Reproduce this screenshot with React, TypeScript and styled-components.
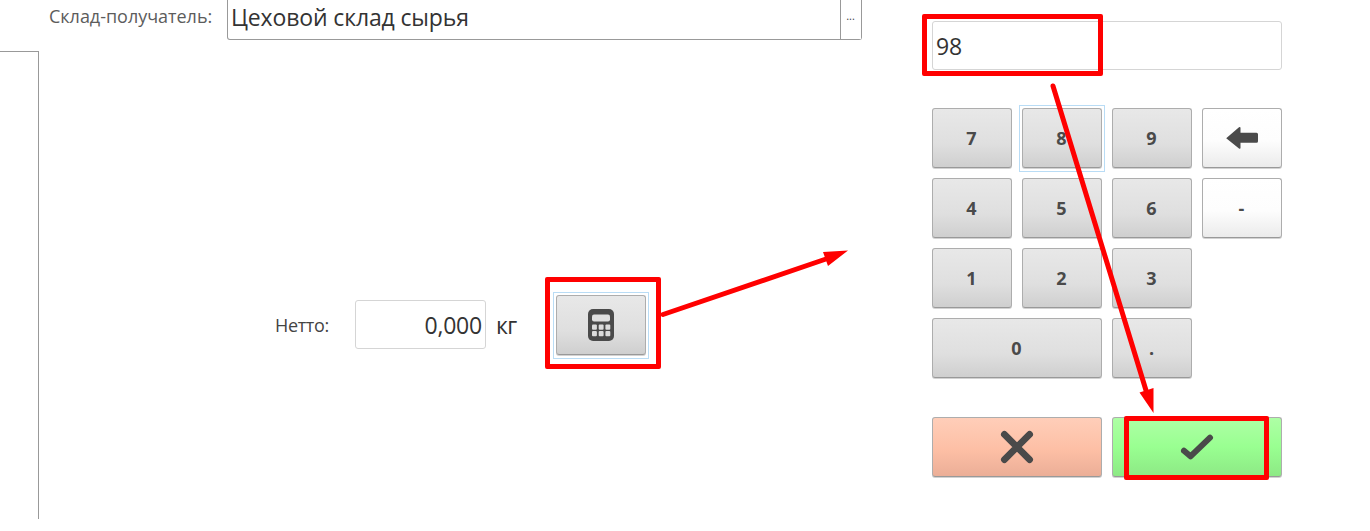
import React from "react";
import styled, { createGlobalStyle } from "styled-components";

const GlobalStyle = createGlobalStyle`
  *, *::before, *::after { box-sizing: border-box; }
  body { margin: 0; background: #fff; }
  button { font: inherit; margin: 0; }
`;

const Page = styled.main`
  position: relative;
  display: flex;
  gap: 70px;
  width: 1370px;
  height: 531px;
  overflow: hidden;
  background: #fff;
  color: #333;
  font-family: "Open Sans", "Noto Sans", sans-serif;
`;

const FormSide = styled.section`
  display: flex;
  flex-direction: column;
  gap: 11px;
  width: 862px;
  height: 519px;
`;

const FieldRow = styled.div`
  display: flex;
  height: 40px;
  padding-left: 49px;
`;

const FieldLabel = styled.label`
  width: 178px;
  padding-top: 3px;
  font-size: 18px;
  line-height: 26px;
  letter-spacing: -0.02px;
  color: #5c5c5c;
  white-space: nowrap;
`;

const SelectField = styled.div`
  display: flex;
  flex: 1;
  border: 1px solid #999;
  border-top: 0;
  border-radius: 0 0 3px 3px;
`;

const SelectValue = styled.span`
  flex: 1;
  padding: 1px 0 0 3px;
  font-size: 23px;
  line-height: 32px;
  letter-spacing: -0.14px;
  white-space: nowrap;
`;

const MoreButton = styled.button`
  width: 21px;
  padding: 0 1px 8px 0;
  border: 0;
  border-left: 1px solid #999;
  background: #fff;
  color: #444;
  font-size: 11px;
  line-height: 31px;
`;

const FormBody = styled.div`
  display: flex;
  flex: 1;
`;

const ListPanel = styled.div`
  width: 39px;
  border: 1px solid #999;
  border-width: 1px 1px 0 0;
`;

const WeightRow = styled.div`
  display: flex;
  align-items: flex-start;
  padding: 244px 0 0 236px;
`;

const WeightLabel = styled.label`
  width: 80px;
  padding-top: 17px;
  font-size: 18px;
  line-height: 26px;
  letter-spacing: -0.35px;
  color: #444;
`;

const ValueBox = styled.div<{ $width: number; $right?: boolean; $top?: number }>`
  width: ${(p) => p.$width}px;
  height: 49px;
  margin-top: ${(p) => p.$top ?? 0}px;
  padding: 0 3px;
  border: 1px solid #d5d5d5;
  border-radius: 3px;
  font-size: 23px;
  line-height: 48px;
  letter-spacing: -0.2px;
  text-align: ${(p) => (p.$right ? "right" : "left")};
`;

const Unit = styled.span`
  width: 70px;
  padding: 14px 0 0 10px;
  font-size: 23px;
  line-height: 32px;
  letter-spacing: -0.6px;
`;

type Tone = "grey" | "white" | "red" | "green";

const fills: Record<Tone, string> = {
  grey: "linear-gradient(#e8e8e8, #dfdfdf 60%, #cfcfcf)",
  white: "linear-gradient(#fff, #fdfdfd 55%, #ebebeb)",
  red: "linear-gradient(#ffceb9, #fdbfa5 55%, #ebae97)",
  green: "linear-gradient(#aeffa5, #99ff91 50%, #8de985)",
};

const Key = styled.button<{ $tone?: Tone; $span?: number; $focused?: boolean; $width?: number }>`
  position: relative;
  display: flex;
  align-items: center;
  justify-content: center;
  grid-column: span ${(p) => p.$span ?? 1};
  width: ${(p) => (p.$width ? `${p.$width}px` : "auto")};
  height: 60px;
  padding: 0 1px 0 0;
  border: 1px solid #adadad;
  border-bottom-color: #999;
  border-radius: 3px;
  box-shadow: 0 1px 0 #d2d2d2;
  background: ${(p) => fills[p.$tone ?? "grey"]};
  color: #4a4a4a;
  font-size: 18px;
  font-weight: 700;
  line-height: 26px;

  &::after {
    content: "";
    display: ${(p) => (p.$focused ? "block" : "none")};
    position: absolute;
    inset: -4px -4px -5px;
    border: 1px solid #b9dcf5;
  }
`;

const KeypadSide = styled.section`
  width: 350px;
  padding-top: 21px;
`;

const KeyGrid = styled.div`
  display: grid;
  grid-template-columns: repeat(4, 80px);
  gap: 10px;
  margin-top: 38px;
`;

const ActionRow = styled.div`
  display: grid;
  grid-template-columns: 170px 170px;
  gap: 10px;
  margin-top: 39px;
`;

const GridGap = styled.span``;

const Highlight = styled.div<{ $x: number; $y: number; $w: number; $h: number }>`
  position: absolute;
  left: ${(p) => p.$x}px;
  top: ${(p) => p.$y}px;
  width: ${(p) => p.$w}px;
  height: ${(p) => p.$h}px;
  border: 5px solid #f00;
  border-radius: 2px;
  pointer-events: none;
`;

const Arrows = styled.svg`
  position: absolute;
  inset: 0;
  pointer-events: none;
`;

const Icon = styled.svg`
  display: block;
  flex: none;
  position: relative;
  left: 0.5px;
`;

const CalculatorIcon = () => (
  <Icon width="26" height="32" viewBox="0 0 26 32">
    <rect width="26" height="32" rx="5" fill="#4a4a4a" />
    <rect x="4" y="5.5" width="18" height="7" rx="2" fill="#e0e0e0" />
    {[15.5, 22].map((y) =>
      [4, 10.7, 17.4].map((x) => (
        <rect key={`${x}-${y}`} x={x} y={y} width="4.9" height="5.2" rx="1" fill="#dcdcdc" />
      )),
    )}
  </Icon>
);

const BackIcon = () => (
  <Icon width="32" height="24" viewBox="0 0 32 24">
    <path d="M0.200 12.300 13 1.300q1.500-.8 1.500.8V6.800H30.500q1.500 0 1.500 1.500v7q0 1.500-1.500 1.500H14.500v5q0 1.600-1.500.8Z" fill="#4a4a4a" />
  </Icon>
);

const CrossIcon = () => (
  <Icon width="34" height="34" viewBox="0 0 34 34">
    <path d="M4.400 4.400 29.600 29.600M29.600 4.400 4.400 29.600" stroke="#4a4a4a" strokeWidth="6.800" strokeLinecap="round" />
  </Icon>
);

const CheckIcon = () => (
  <Icon width="34" height="28" viewBox="0 0 34 28">
    <path d="M4 17.800 10.500 23.300 30 4.700" fill="none" stroke="#4a4a4a" strokeWidth="6" strokeLinecap="round" strokeLinejoin="round" />
  </Icon>
);

export default function App() {
  return (
    <>
      <GlobalStyle />
      <Page>
        <FormSide>
          <FieldRow>
            <FieldLabel>Склад-получатель:</FieldLabel>
            <SelectField>
              <SelectValue>Цеховой склад сырья</SelectValue>
              <MoreButton>...</MoreButton>
            </SelectField>
          </FieldRow>
          <FormBody>
            <ListPanel />
            <WeightRow>
              <WeightLabel>Нетто:</WeightLabel>
              <ValueBox $width={131} $right $top={5}>0,000</ValueBox>
              <Unit>кг</Unit>
              <Key $width={90} $focused aria-label="Калькулятор">
                <CalculatorIcon />
              </Key>
            </WeightRow>
          </FormBody>
        </FormSide>
        <KeypadSide>
          <ValueBox $width={350}>98</ValueBox>
          <KeyGrid>
            <Key>7</Key>
            <Key $focused>8</Key>
            <Key>9</Key>
            <Key $tone="white"><BackIcon /></Key>
            <Key>4</Key>
            <Key>5</Key>
            <Key>6</Key>
            <Key $tone="white">-</Key>
            <Key>1</Key>
            <Key>2</Key>
            <Key>3</Key>
            <GridGap />
            <Key $span={2}>0</Key>
            <Key>.</Key>
          </KeyGrid>
          <ActionRow>
            <Key $tone="red"><CrossIcon /></Key>
            <Key $tone="green"><CheckIcon /></Key>
          </ActionRow>
        </KeypadSide>
        <Highlight $x={922} $y={14} $w={181} $h={62} />
        <Highlight $x={545} $y={277} $w={116} $h={92} />
        <Highlight $x={1124} $y={416} $w={145} $h={64} />
        <Arrows width="1370" height="531" viewBox="0 0 1370 531">
          <g fill="#f00" stroke="#f00">
            <path d="M663 314.500 826 259M1053 86 1146.500 392" strokeWidth="5" strokeLinecap="round" />
            <path d="M848 250.500 823 252 828 266ZM1153.500 413 1139.500 392.500 1153.500 388Z" stroke="none" />
          </g>
        </Arrows>
      </Page>
    </>
  );
}
